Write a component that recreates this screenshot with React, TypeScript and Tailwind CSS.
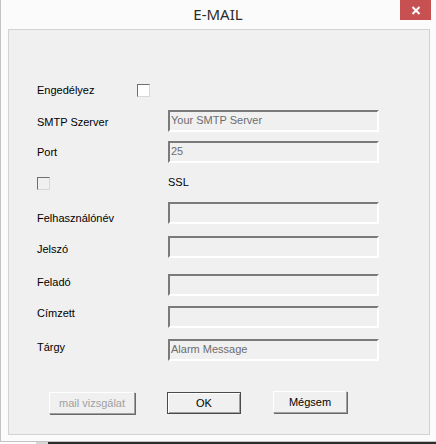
import React from 'react';

const sunken =
  'h-[22px] w-[211px] border-2 border-t-[#7a7a7a] border-l-[#7a7a7a] border-b-white border-r-white bg-[#f0f0f0] px-[1px] text-[11px] leading-[16px] text-[#6d6d6d]';

function Field({ label, value, shift }: { label: string; value?: string; shift: string }) {
  return (
    <div className="flex h-[22px] items-center">
      <div className={`w-[131px] text-[11px] text-black ${shift}`}>{label}</div>
      <div className={sunken}>{value}</div>
    </div>
  );
}

function CheckBox({ white }: { white?: boolean }) {
  return (
    <div
      className={`h-[13px] w-[13px] border border-t-[#6f6f6f] border-l-[#6f6f6f] border-b-[#d8d8d8] border-r-[#d8d8d8] ${
        white ? 'bg-white' : 'bg-[#f0f0f0]'
      }`}
    />
  );
}

export default function App() {
  return (
    <div
      className="relative h-[444px] w-[436px] overflow-hidden bg-white"
      style={{ fontFamily: '"Liberation Sans", Arial, sans-serif' }}
    >
      <div className="flex h-[442px] flex-col border-b border-l border-[#c4c4c4] bg-[#fbfbfb]">
        <div className="relative flex h-[29px] items-center justify-center">
          <span
            className="mr-[1px] text-[15px] text-[#2b2b2b]"
            style={{ fontFamily: '"Noto Sans", "Open Sans", sans-serif' }}
          >
            E-MAIL
          </span>
          <div className="absolute right-[5px] top-0 flex h-[20px] w-[31px] items-center justify-center bg-[#c75050]">
            <svg width="10" height="9" viewBox="0 0 10 9">
              <path d="M1.5 1 L8.5 8 M8.5 1 L1.5 8" stroke="white" strokeWidth="2" />
            </svg>
          </div>
        </div>
        <div className="ml-[7px] h-[406px] w-[422px] border border-[#d2d2d2] bg-[#f0f0f0] pl-[28px]">
          <div className="mt-[49px] flex h-[22px] items-center">
            <div className="w-[100px] text-[11px] text-black">Engedélyez</div>
            <CheckBox white />
          </div>
          <div className="mt-[9px]">
            <Field label="SMTP Szerver" value="Your SMTP Server" shift="translate-y-[1px]" />
          </div>
          <div className="mt-[9px]">
            <Field label="Port" value="25" shift="" />
          </div>
          <div className="mt-[9px] flex h-[22px] items-center">
            <div className="w-[131px]">
              <CheckBox />
            </div>
            <div className="-translate-y-[1px] text-[11px] text-black">SSL</div>
          </div>
          <div className="mt-[8px]">
            <Field label="Felhasználónév" shift="translate-y-[5px]" />
          </div>
          <div className="mt-[12px]">
            <Field label="Jelszó" shift="translate-y-[2px]" />
          </div>
          <div className="mt-[16px]">
            <Field label="Feladó" shift="-translate-y-[3px]" />
          </div>
          <div className="mt-[10px]">
            <Field label="Címzett" shift="-translate-y-[4px]" />
          </div>
          <div className="mt-[11px]">
            <Field label="Tárgy" value="Alarm Message" shift="-translate-y-[3px]" />
          </div>
          <div className="mt-[31px] flex items-start text-[11px]">
            <button className="ml-[12px] h-[22px] w-[86px] border border-t-white border-l-white border-b-[#a0a0a0] border-r-[#a0a0a0] bg-[#f0f0f0] text-[#a0a0a0] shadow-[1px_1px_0_#696969]">
              mail vizsgálat
            </button>
            <button className="ml-[32px] h-[22px] w-[74px] border border-[#4a4a4a] bg-[#f0f0f0] text-black shadow-[inset_1px_1px_0_#ffffff,inset_-1px_-1px_0_#a0a0a0]">
              OK
            </button>
            <button className="-mt-[1px] ml-[32px] h-[22px] w-[74px] border border-t-white border-l-white border-b-[#a0a0a0] border-r-[#a0a0a0] bg-[#f0f0f0] text-black shadow-[1px_1px_0_#696969]">
              Mégsem
            </button>
          </div>
        </div>
      </div>
      <div className="flex h-[2px]">
        <div className="w-[36px] bg-white" />
        <div className="w-[12px] bg-[#d6d6d6]" />
        <div className="flex-1 bg-[#2d2d2d]" />
      </div>
    </div>
  );
}
